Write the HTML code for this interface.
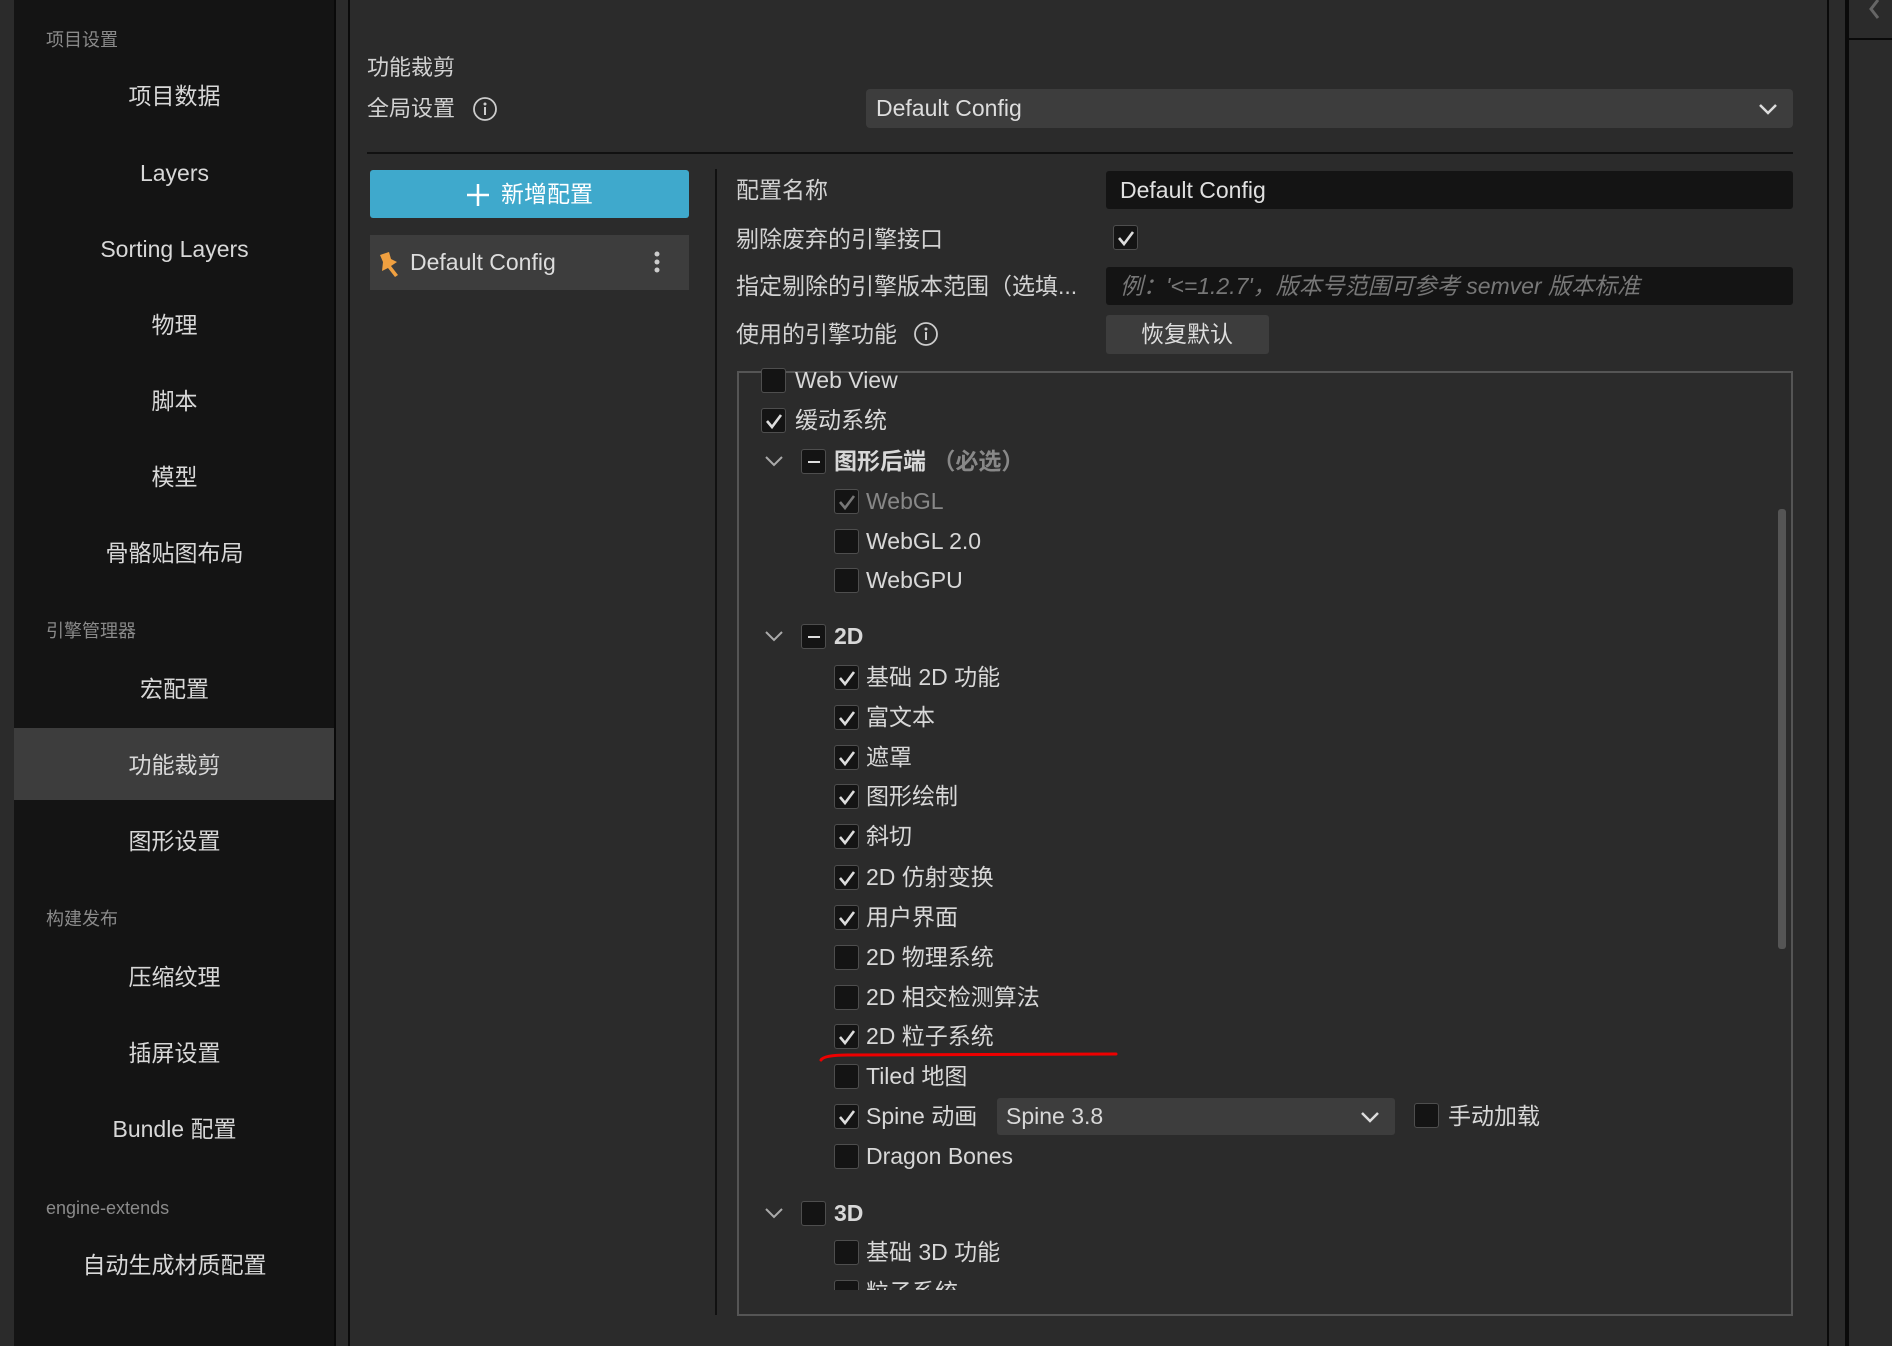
<!DOCTYPE html>
<html><head><meta charset="utf-8"><style>
*{margin:0;padding:0;box-sizing:border-box}
body{width:1892px;height:1346px;background:#2b2b2b;position:relative;overflow:hidden;font-family:"Liberation Sans","Noto Sans CJK SC",sans-serif;color:#d2d2d2}
.a{position:absolute;white-space:nowrap}
.side{position:absolute;left:14px;top:0;width:321px;height:1346px;background:#141414}
.si{position:absolute;left:0;width:321px;text-align:center;font-size:23px;line-height:30px;color:#d8d8d8}
.sh{position:absolute;left:32px;font-size:18px;color:#8a8a8a;line-height:24px}
.lbl{font-size:23px;line-height:30px}
.cb{position:absolute;width:25px;height:25px;background:#141414;border:1.5px solid #4e4e4e;border-radius:3px}
.cb svg{position:absolute;left:1px;top:1px}
.t{position:absolute;font-size:23px;line-height:30px;color:#d8d8d8;white-space:nowrap}
.chev{position:absolute}
</style></head><body>
<div class="side">
<div class="sh" style="top:28px">项目设置</div>
<div class="si" style="top:81px">项目数据</div>
<div class="si" style="top:158px">Layers</div>
<div class="si" style="top:234px">Sorting Layers</div>
<div class="si" style="top:310px">物理</div>
<div class="si" style="top:386px">脚本</div>
<div class="si" style="top:462px">模型</div>
<div class="si" style="top:538px">骨骼贴图布局</div>
<div class="sh" style="top:619px">引擎管理器</div>
<div class="si" style="top:674px">宏配置</div>
<div style="position:absolute;left:0;top:728px;width:321px;height:72px;background:#3d3d3d"></div>
<div class="si" style="top:750px">功能裁剪</div>
<div class="si" style="top:826px">图形设置</div>
<div class="sh" style="top:907px">构建发布</div>
<div class="si" style="top:962px">压缩纹理</div>
<div class="si" style="top:1038px">插屏设置</div>
<div class="si" style="top:1114px">Bundle 配置</div>
<div class="sh" style="top:1196px">engine-extends</div>
<div class="si" style="top:1250px">自动生成材质配置</div>
</div>
<div class="a" style="left:334px;top:0;width:2px;height:1346px;background:#0a0a0a"></div>
<div class="a" style="left:348px;top:0;width:2px;height:1346px;background:#0a0a0a"></div>
<div class="a" style="left:1827px;top:0;width:2px;height:1346px;background:#0a0a0a"></div>
<div class="a" style="left:1845px;top:0;width:4px;height:1346px;background:#0a0a0a"></div>
<div class="a" style="left:1849px;top:38px;width:43px;height:2px;background:#0a0a0a"></div>
<svg class="a" style="left:1866px;top:0" width="16" height="22"><path d="M12 0 L5 9 L12 18" stroke="#666" stroke-width="3" fill="none"/></svg>

<div class="a lbl" style="left:367px;top:53px;font-size:22px">功能裁剪</div>
<div class="a lbl" style="left:367px;top:94px;font-size:22px">全局设置</div>
<svg class="a" style="left:472px;top:96px" width="26" height="26"><circle cx="13" cy="13" r="11" stroke="#ccc" stroke-width="1.8" fill="none"/><circle cx="13" cy="8" r="1.5" fill="#ccc"/><path d="M13 11v8" stroke="#ccc" stroke-width="2"/></svg>
<div class="a" style="left:866px;top:89px;width:927px;height:39px;background:#3d3d3d;border-radius:4px"></div>
<div class="a lbl" style="left:876px;top:93px;color:#ddd">Default Config</div>
<svg class="a" style="left:1757px;top:100px" width="22" height="18"><path d="M3 5 L11 13 L19 5" stroke="#ddd" stroke-width="2.5" fill="none"/></svg>
<div class="a" style="left:367px;top:152px;width:1426px;height:2px;background:#111"></div>

<div class="a" style="left:370px;top:170px;width:319px;height:48px;background:#3fa9cc;border-radius:3px"></div>
<svg class="a" style="left:465px;top:182px" width="26" height="26"><path d="M13 2v22M2 13h22" stroke="#fff" stroke-width="2.5"/></svg>
<div class="a lbl" style="left:501px;top:179px;color:#fff">新增配置</div>
<div class="a" style="left:370px;top:235px;width:319px;height:55px;background:#3d3d3d"></div>
<svg class="a" style="left:377px;top:250px" width="26" height="28"><path d="M3 5 L12 2 L14 9 L20 12 L14 16 L21 25 L18 27 L11 18 L5 21 L6 12 Z" fill="#f0a040"/></svg>
<div class="a lbl" style="left:410px;top:247px;color:#ddd">Default Config</div>
<svg class="a" style="left:652px;top:250px" width="10" height="26"><circle cx="5" cy="4" r="2.5" fill="#ccc"/><circle cx="5" cy="12" r="2.5" fill="#ccc"/><circle cx="5" cy="20" r="2.5" fill="#ccc"/></svg>
<div class="a" style="left:715px;top:169px;width:2px;height:1146px;background:#111"></div>

<div class="a lbl" style="left:736px;top:175px">配置名称</div>
<div class="a" style="left:1106px;top:171px;width:687px;height:38px;background:#141414;border-radius:3px"></div>
<div class="a lbl" style="left:1120px;top:175px;color:#e0e0e0">Default Config</div>
<div class="a lbl" style="left:736px;top:224px">剔除废弃的引擎接口</div>
<div class="cb" style="left:1113px;top:225px"><svg width="22" height="22"><path d="M4 11 L9 17 L18 5" stroke="#ddd" stroke-width="2.6" fill="none"/></svg></div>
<div class="a lbl" style="left:736px;top:271px">指定剔除的引擎版本范围（选填...</div>
<div class="a" style="left:1106px;top:267px;width:687px;height:38px;background:#141414;border-radius:3px"></div>
<div class="a lbl" style="left:1120px;top:271px;color:#777;font-style:italic">例：'&lt;=1.2.7'，版本号范围可参考 semver 版本标准</div>
<div class="a lbl" style="left:736px;top:319px">使用的引擎功能</div>
<svg class="a" style="left:913px;top:321px" width="26" height="26"><circle cx="13" cy="13" r="11" stroke="#ccc" stroke-width="1.8" fill="none"/><circle cx="13" cy="8" r="1.5" fill="#ccc"/><path d="M13 11v8" stroke="#ccc" stroke-width="2"/></svg>
<div class="a" style="left:1106px;top:315px;width:163px;height:39px;background:#3d3d3d;border-radius:3px"></div>
<div class="a lbl" style="left:1141px;top:319px;color:#ddd">恢复默认</div>

<div class="a" style="left:737px;top:371px;width:1056px;height:945px;border:2px solid #555;overflow:hidden">
<div style="position:absolute;left:1039px;top:136px;width:8px;height:440px;background:#555;border-radius:3px"></div>
</div>
<div class="a" style="left:739px;top:1290px;width:1052px;height:24px;background:#2b2b2b"></div>
<div class="a" style="left:739px;top:373px;width:1052px;height:0"></div>

<!-- tree rows -->
<div id="tree"></div>
<svg class="a" style="left:818px;top:1050px" width="302" height="14"><path d="M3 10 Q6 5 30 5 L298 4" stroke="#e00" stroke-width="3" fill="none" stroke-linecap="round"/></svg>

<div class="a" style="left:997px;top:1098px;width:398px;height:37px;background:#3d3d3d;border-radius:3px"></div>
<div class="t" style="left:1006px;top:1101px">Spine 3.8</div>
<svg class="a" style="left:1359px;top:1108px" width="22" height="18"><path d="M3 5 L11 13 L19 5" stroke="#ddd" stroke-width="2.5" fill="none"/></svg>
<div class="cb" style="left:1414px;top:1103px"></div>
<div class="t" style="left:1448px;top:1101px">手动加载</div>

<script>
var ck='<svg width="22" height="22"><path d="M4 11 L9 17 L18 5" stroke="#ddd" stroke-width="2.6" fill="none"/></svg>';
var ckd='<svg width="22" height="22"><path d="M4 11 L9 17 L18 5" stroke="#777" stroke-width="2.6" fill="none"/></svg>';
var dash='<svg width="22" height="22"><path d="M5 11 H17" stroke="#ddd" stroke-width="2"/></svg>';
var rows=[
[380,0,0,'Web View'],[420,0,1,'缓动系统'],[461,1,2,'图形后端 <span style="color:#888">（必选）</span>'],
[501,2,3,'<span style="color:#888">WebGL</span>'],[541,2,0,'WebGL 2.0'],[580,2,0,'WebGPU'],
[636,1,2,'2D'],[677,2,1,'基础 2D 功能'],[717,2,1,'富文本'],[757,2,1,'遮罩'],[796,2,1,'图形绘制'],
[836,2,1,'斜切'],[877,2,1,'2D 仿射变换'],[917,2,1,'用户界面'],[957,2,0,'2D 物理系统'],
[997,2,0,'2D 相交检测算法'],[1036,2,1,'2D 粒子系统'],[1076,2,0,'Tiled 地图'],[1116,2,1,'Spine 动画'],
[1156,2,0,'Dragon Bones'],[1213,1,0,'3D'],[1252,2,0,'基础 3D 功能'],[1292,2,0,'粒子系统']];
var h='';
rows.forEach(function(r){
 var y=r[0],lv=r[1],c=r[2],tx=r[3];
 var cx=lv==0?773:(lv==1?813:846);
 var tl=lv==0?795:(lv==1?834:866);
 var inner=c==1?ck:(c==2?dash:(c==3?ckd:''));
 h+='<div class="cb" style="left:'+(cx-12)+'px;top:'+(y-12)+'px">'+inner+'</div>';
 var bold=lv==1?'font-weight:bold;':'';
 h+='<div class="t" style="left:'+tl+'px;top:'+(y-15)+'px;'+bold+'">'+tx+'</div>';
 if(lv==1)h+='<svg class="chev" style="left:764px;top:'+(y-7)+'px" width="20" height="14"><path d="M2 3 L10 11 L18 3" stroke="#aaa" stroke-width="2" fill="none"/></svg>';
});
document.getElementById('tree').innerHTML=h;
</script>
<div class="a" style="left:739px;top:1290px;width:1052px;height:24px;background:#2b2b2b"></div>
<div class="a" style="left:737px;top:1314px;width:1056px;height:2px;background:#555"></div>
</body></html>
